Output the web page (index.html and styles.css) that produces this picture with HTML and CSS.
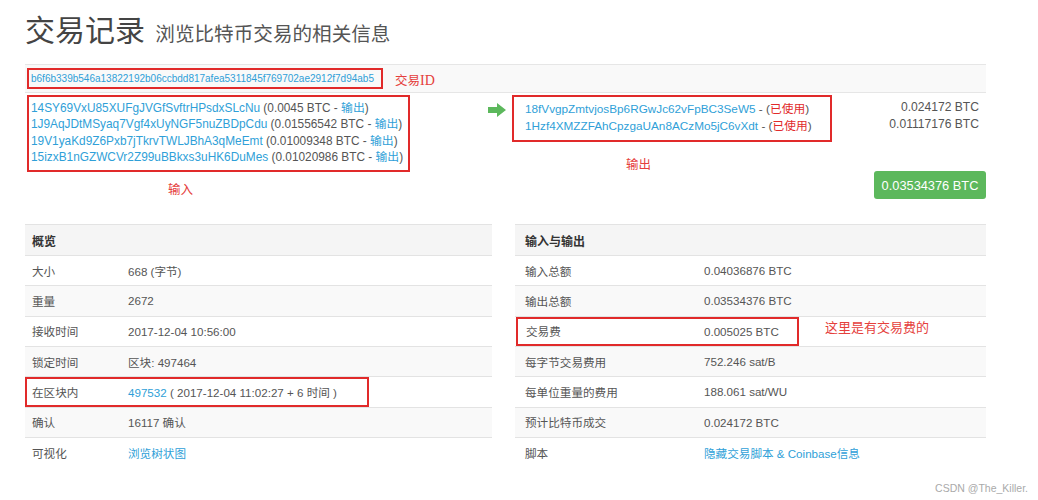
FILE: index.html
```html
<!DOCTYPE html>
<html lang="zh">
<head>
<meta charset="utf-8">
<title>交易记录</title>
<link rel="stylesheet" href="styles.css">
</head>
<body>
<div class="page">
  <h1 class="title">交易记录 <small>浏览比特币交易的相关信息</small></h1>

  <div class="tx">
    <div class="tx-head">
      <span class="hash-box"><a class="hash">b6f6b339b546a13822192b06ccbdd817afea5311845f769702ae2912f7d94ab5</a></span>
      <span class="note note-id">交易<span class="serif">ID</span></span>
    </div>
    <div class="tx-body">
      <div class="col-in">
        <div class="in-box">
          <div><a>14SY69VxU85XUFgJVGfSvftrHPsdxSLcNu</a> (0.0045 BTC - <a>输出</a>)</div>
          <div><a>1J9AqJDtMSyaq7Vgf4xUyNGF5nuZBDpCdu</a> (0.01556542 BTC - <a>输出</a>)</div>
          <div><a>19V1yaKd9Z6Pxb7jTkrvTWLJBhA3qMeEmt</a> (0.01009348 BTC - <a>输出</a>)</div>
          <div><a>15izxB1nGZWCVr2Z99uBBkxs3uHK6DuMes</a> (0.01020986 BTC - <a>输出</a>)</div>
        </div>
        <div class="note note-in">输入</div>
      </div>
      <div class="col-out">
        <div class="out-row">
          <svg class="arrow" width="18" height="14" viewBox="0 0 18 14"><path d="M0 4h9V0l9 7-9 7v-4H0z" fill="#5cb85c"/></svg>
          <div class="out-box">
            <div><a>18fVvgpZmtvjosBp6RGwJc62vFpBC3SeW5</a> - (<span class="used">已使用</span>)</div>
            <div><a>1Hzf4XMZZFAhCpzgaUAn8ACzMo5jC6vXdt</a> - (<span class="used">已使用</span>)</div>
          </div>
          <div class="out-vals">
            <div>0.024172 BTC</div>
            <div>0.01117176 BTC</div>
          </div>
        </div>
        <div class="note note-out">输出</div>
        <div class="total-row"><span class="btn-total">0.03534376 BTC</span></div>
      </div>
    </div>
  </div>

  <div class="tables">
    <div class="tbl tbl-left">
      <div class="row head"><span class="k">概览</span></div>
      <div class="row"><span class="k">大小</span><span class="v">668 (字节)</span></div>
      <div class="row odd"><span class="k">重量</span><span class="v">2672</span></div>
      <div class="row"><span class="k">接收时间</span><span class="v">2017-12-04 10:56:00</span></div>
      <div class="row odd"><span class="k">锁定时间</span><span class="v">区块: 497464</span></div>
      <div class="row"><div class="box box-block"><span class="k">在区块内</span><span class="v"><a>497532</a> ( 2017-12-04 11:02:27 + 6 时间 )</span></div></div>
      <div class="row odd"><span class="k">确认</span><span class="v">16117 确认</span></div>
      <div class="row"><span class="k">可视化</span><span class="v"><a>浏览树状图</a></span></div>
    </div>
    <div class="tbl tbl-right">
      <div class="row head"><span class="k">输入与输出</span></div>
      <div class="row"><span class="k">输入总额</span><span class="v">0.04036876 BTC</span></div>
      <div class="row odd"><span class="k">输出总额</span><span class="v">0.03534376 BTC</span></div>
      <div class="row"><div class="box box-fee"><span class="k">交易费</span><span class="v">0.005025 BTC</span></div><span class="note note-fee">这里是有交易费的</span></div>
      <div class="row odd"><span class="k">每字节交易费用</span><span class="v">752.246 sat/B</span></div>
      <div class="row"><span class="k">每单位重量的费用</span><span class="v">188.061 sat/WU</span></div>
      <div class="row odd"><span class="k">预计比特币成交</span><span class="v">0.024172 BTC</span></div>
      <div class="row"><span class="k">脚本</span><span class="v"><a>隐藏交易脚本 &amp; Coinbase信息</a></span></div>
    </div>
  </div>
  <div class="watermark">CSDN @The_Killer.</div>
</div>
</body>
</html>
```

FILE: styles.css
```css
* { box-sizing: border-box; }
html, body { margin: 0; padding: 0; background: #fff; }
body {
  font-family: "Liberation Sans", Arial, "Noto Sans CJK SC", sans-serif;
  color: #555;
  font-size: 11.6px;
}
a { color: #2f9fd8; text-decoration: none; }
.page { width: 1038px; height: 500px; padding: 0 52px 0 25px; position: relative; }

.title {
  margin: 0;
  padding-top: 13px;
  height: 64px;
  font-weight: normal;
  font-size: 30px;
  line-height: 36px;
  color: #444;
}
.title small { font-size: 19.6px; color: #555; margin-left: 2px; }

.tx-head {
  border-top: 1px solid #e6e6e6;
  border-bottom: 1px solid #e6e6e6;
  background: #f9f9f9;
  height: 29px;
  display: flex;
  align-items: center;
  padding-left: 2px;
}
.hash-box {
  border: 2px solid #e12a2a;
  height: 21px;
  width: 356px;
  display: flex;
  align-items: center;
  padding-left: 2px;
}
.hash { font-size: 10px; }
.note { color: #e5403c; font-size: 12.5px; font-family: "Noto Sans CJK SC", sans-serif; }
.serif { font-family: "Liberation Serif", serif; font-size: 14px; }
.note-id { margin-left: 12px; margin-top: 2px; }

.tx-body { display: flex; padding-top: 2px; }
.col-in { width: 453px; padding-left: 2px; }
.in-box {
  border: 2px solid #e12a2a;
  width: 383px;
  height: 77px;
  padding: 3px 0 0 2px;
  font-size: 11.85px;
  line-height: 16.4px;
  white-space: nowrap;
}
.note-in { margin: 9px 0 0 141px; line-height: 16px; }

.col-out { flex: 1; }
.out-row { display: flex; align-items: flex-start; }
.arrow { margin: 8px 0 0 10px; }
.out-box {
  border: 2px solid #e12a2a;
  width: 320px;
  height: 47px;
  margin-left: 6px;
  padding: 4px 0 0 11px;
  font-size: 11.75px;
  line-height: 16.6px;
  white-space: nowrap;
}
.used { color: #e12a2a; }
.out-vals {
  flex: 1;
  text-align: right;
  padding: 4px 7px 0 0;
  font-size: 12.1px;
  line-height: 16.6px;
}
.note-out { margin: 14px 0 0 148px; line-height: 16px; }
.total-row { display: flex; justify-content: flex-end; margin-top: -1px; }
.btn-total {
  background: #5cb85c;
  color: #fff;
  border-radius: 3px;
  width: 112px;
  height: 28px;
  display: flex;
  align-items: center;
  justify-content: center;
  font-size: 12.8px;
}

.tables {
  display: grid;
  grid-template-columns: 467px 471px;
  column-gap: 23px;
  margin-top: 25px;
}
.row {
  display: flex;
  align-items: center;
  height: 30.33px;
  border-top: 1px solid #e3e3e3;
  font-size: 11.6px;
  white-space: nowrap;
}
.row.odd { background: #f9f9f9; }
.row.head { background: #f5f5f5; font-weight: bold; color: #333; height: 31px; font-size: 12px; }
.tbl-left .k { width: 103px; padding-left: 7px; flex: none; }
.tbl-right .k { width: 189px; padding-left: 10px; flex: none; }
.box {
  display: flex;
  align-items: center;
  height: 100%;
  border: 2px solid #e12a2a;
}
.tbl-left .box .k { padding-left: 5px; width: 101px; }
.box-block { width: 344px; }
.tbl-right .box .k { padding-left: 8px; width: 186px; }
.box-fee { width: 283px; margin-left: 1px; }
.note-fee { margin-left: 26px; margin-top: -10px; font-size: 13px; }

.watermark {
  position: absolute;
  right: 10px;
  bottom: 6px;
  font-size: 10.5px;
  color: #aaa;
}
```
